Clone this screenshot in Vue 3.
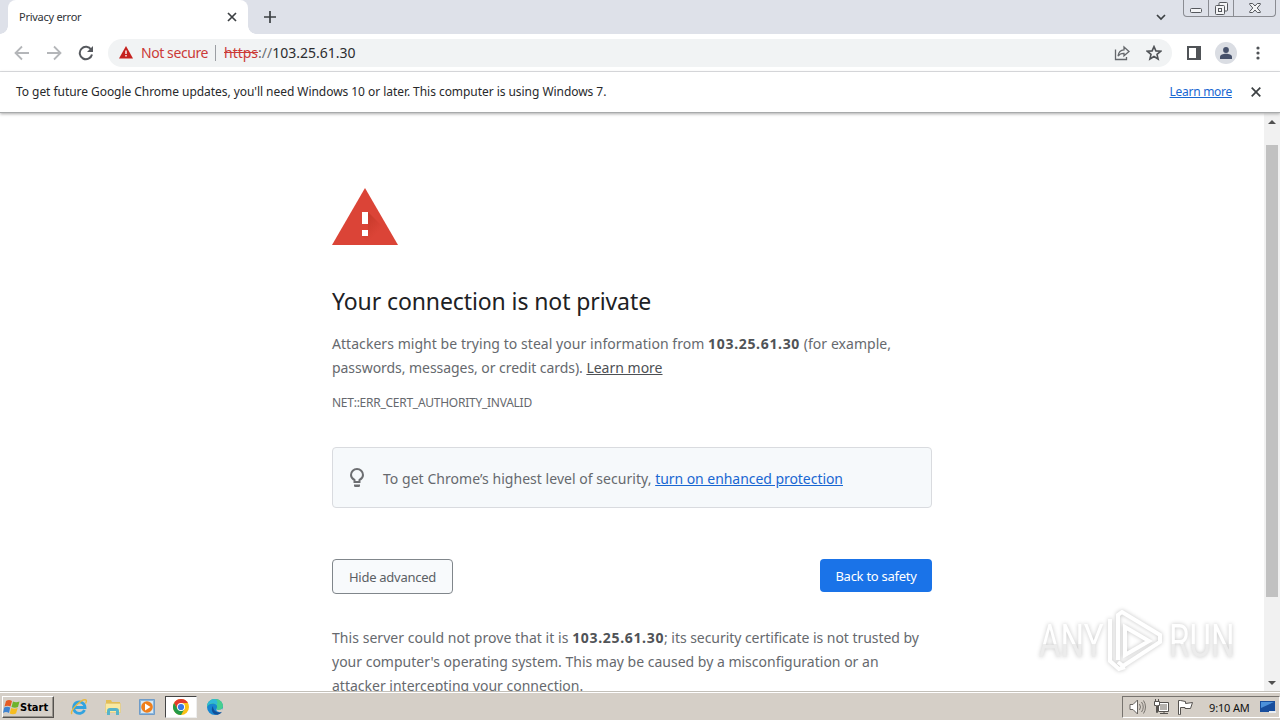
<template>
  <div class="screen">
    <header class="tab-strip">
      <div class="tab">
        <span class="tab-title">Privacy error</span>
        <svg class="tab-close" width="10" height="10" viewBox="0 0 10 10"><path d="M1 1l8 8M9 1L1 9" /></svg>
      </div>
      <svg class="new-tab" width="12" height="12" viewBox="0 0 12 12"><path d="M6 0v12M0 6h12" /></svg>
      <svg class="tab-search" width="10" height="7" viewBox="0 0 10 7"><path d="M1 1l4 4 4-4" /></svg>
      <div class="window-controls">
        <span class="control"><svg width="12" height="5" viewBox="0 0 12 5"><rect x=".5" y=".5" width="11" height="4" rx="1" /></svg></span>
        <span class="control middle"><svg width="13" height="13" viewBox="0 0 13 13"><path d="M4 3.500V1.500Q4 .5 5 .5h6.500q1 0 1 1V8q0 1-1 1h-2" /><rect x=".5" y="3.500" width="9" height="9" rx="1" /><rect x="3.500" y="6.500" width="3" height="3" /></svg></span>
        <span class="control close"><svg width="12" height="10" viewBox="0 0 12 10"><path d="M.7.5h3L6 3 8.300.5h3v1L8.200 5l3.100 3.500v1h-3L6 7 3.700 9.500h-3v-1L3.800 5 .7 1.500z" /></svg></span>
      </div>
    </header>

    <div class="toolbar">
      <svg class="nav" width="16" height="16" viewBox="0 0 16 16"><path d="M15 8H2M8 1.500L1.500 8 8 14.500" /></svg>
      <svg class="nav" width="16" height="16" viewBox="0 0 16 16"><path d="M1 8h13M8 1.500L14.500 8 8 14.500" /></svg>
      <svg class="nav reload" width="16" height="16" viewBox="0 0 16 16"><path d="M13.200 4.700A6.200 6.200 0 1 0 14 9.500" /><path class="solid" d="M15 1v6H9z" /></svg>
      <div class="omnibox">
        <svg class="warn" width="14" height="13" viewBox="0 0 14 13"><path fill="#c5221f" d="M7 0l7 12.500H0z" /><path fill="#fff" d="M6.300 4.500h1.400v3.500H6.300zm0 4.500h1.400v1.500H6.300z" /></svg>
        <span class="not-secure">Not secure</span>
        <span class="divider"></span>
        <span class="url"><s>https</s><i>://</i>103.25.61.30</span>
        <svg class="share" width="16" height="16" viewBox="0 0 16 16"><path d="M1.500 4.500v10h11V12" /><path d="M4 11c.6-4 2.500-6 6-6.200V2l5 4.500-5 4.300V8.300C7.300 8.200 5.500 9 4 11z" /></svg>
        <svg class="star" width="16" height="16" viewBox="0 0 16 16"><path d="M8 1.600l1.900 4.300 4.700.4-3.600 3.100 1.100 4.600L8 11.500 3.900 14 5 9.400 1.400 6.300l4.700-.4z" /></svg>
      </div>
      <svg class="panel" width="14" height="14" viewBox="0 0 14 14"><path fill="#505357" fill-rule="evenodd" d="M0 0h14v14H0zM2 2v10h7V2z" /></svg>
      <span class="avatar"><svg width="12" height="12" viewBox="0 0 12 12"><circle cx="6" cy="3" r="2.900" /><path d="M0 12v-2c0-2 3-3.200 6-3.200S12 8 12 10v2z" /></svg></span>
      <svg class="menu" width="4" height="14" viewBox="0 0 4 14"><circle cx="2" cy="2" r="1.600" /><circle cx="2" cy="7" r="1.600" /><circle cx="2" cy="12" r="1.600" /></svg>
    </div>

    <div class="infobar">
      <span class="notice">To get future Google Chrome updates, you'll need Windows 10 or later. This computer is using Windows 7.</span>
      <a class="info-link" href="#">Learn more</a>
      <svg class="info-close" width="10" height="10" viewBox="0 0 10 10"><path d="M.7.7l8.600 8.600M9.300.7L.7 9.300" /></svg>
    </div>

    <div class="viewport">
      <main class="interstitial">
        <svg class="alert" width="66" height="57" viewBox="0 0 66 57">
          <defs>
            <linearGradient id="shade" x1="0" y1="0" x2="1" y2="1">
              <stop offset="0" stop-color="#a52714" stop-opacity=".5" />
              <stop offset=".55" stop-color="#a52714" stop-opacity="0" />
            </linearGradient>
          </defs>
          <path fill="#db4437" d="M33 0l33 57H0z" />
          <path fill="url(#shade)" d="M36 24l16 16 10 17H39l-9-9h6z" />
          <path fill="#fff" d="M30 24h6v12h-6zM30 42h6v6h-6z" />
        </svg>
        <h1>Your connection is not private</h1>
        <div class="copy">
          <div>Attackers might be trying to steal your information from <strong>103.25.61.30</strong> (for example,</div>
          <div class="tight">passwords, messages, or credit cards). <a href="#">Learn more</a></div>
        </div>
        <div class="error-code">NET::ERR_CERT_AUTHORITY_INVALID</div>
        <div class="promo">
          <svg width="14" height="20" viewBox="0 0 14 20"><path fill="none" stroke="#6c6e71" stroke-width="2" d="M4.500 14v-2C2.300 10.800 1 9.200 1 7a6 6 0 0 1 12 0c0 2.200-1.300 3.800-3.500 5v2z" /><path fill="#6c6e71" d="M4 16.500h6v1.200q0 1.300-1.300 1.300H5.300Q4 19 4 17.700z" /></svg>
          <p>To get Chrome’s highest level of security, <a href="#">turn on enhanced protection</a></p>
        </div>
        <div class="buttons">
          <button class="secondary">Hide advanced</button>
          <button class="primary">Back to safety</button>
        </div>
        <div class="copy details">
          <div>This server could not prove that it is <strong>103.25.61.30</strong><span class="tight">; its security certificate is not trusted by</span></div>
          <div class="even">your computer's operating system. This may be caused by a misconfiguration or an</div>
          <div class="even">attacker intercepting your connection.</div>
        </div>
      </main>
      <div class="scrollbar">
        <svg width="8" height="4" viewBox="0 0 8 4"><path d="M4 0l4 4H0z" /></svg>
        <div class="thumb"></div>
        <svg class="down" width="8" height="4" viewBox="0 0 8 4"><path d="M0 0h8L4 4z" /></svg>
      </div>
      <div class="watermark">
        <span class="any">ANY</span>
        <svg width="58" height="62" viewBox="0 0 58 62"><path d="M12 50V5l4-3 38 23v7L17 56l-5-4M19 45V17l24 14zM4 9v42l9 8 6-2" /></svg>
        <span class="run">RUN</span>
      </div>
    </div>

    <footer class="taskbar">
      <div class="start">
        <svg width="17" height="16" viewBox="0 0 17 16"><path fill="#e55b24" d="M3 2q3-2 6 0L7.500 7.500q-3-1.500-6 0z" /><path fill="#6eb32c" d="M10 2.500q3 1.500 6.500 0L15 8q-3 1.500-6.500 0z" /><path fill="#3f83d0" d="M1.200 8.500q3-1.500 6 0L6 14q-3-2-6 0z" /><path fill="#f6bd20" d="M8.200 9q3 1.500 6.500 0L13 14.500q-3 1.500-6.300 0z" /></svg>
        <span>Start</span>
      </div>
      <div class="apps">
        <span class="app"><svg width="18" height="18" viewBox="0 0 18 18"><path fill="none" stroke="#32a3df" stroke-width="2.800" d="M14.500 12A5.700 5.700 0 1 1 15 9.500H5" /><path fill="none" stroke="#e8b93f" stroke-width="1.400" d="M2 16C-1 13 12 0 16 2q1 1-.5 3.500" /></svg></span>
        <span class="app"><svg width="18" height="18" viewBox="0 0 18 18"><path fill="#e3be55" d="M2 2h5l1 2h8v4H2z" /><path fill="#fae9a0" stroke="#dfc678" stroke-width=".6" d="M1.500 5.500h15v9h-15z" /><path fill="#57b4c9" d="M3 17v-4q0-3 3-3h6q3 0 3 3v4h-3v-4H6v4z" /></svg></span>
        <span class="app"><svg width="18" height="18" viewBox="0 0 18 18"><path fill="#8bb7dd" stroke="#6f9cc8" d="M1.500 1.500h15v15h-15z" /><path fill="#d8e9f4" d="M3 3h12v12H3z" /><circle cx="9" cy="9" r="5.800" fill="#ef7f1b" /><path fill="#fff" d="M7 5.500l5.500 3.500L7 12.500z" /></svg></span>
        <span class="app active"><svg width="16" height="16" viewBox="0 0 16 16"><circle cx="8" cy="8" r="8" fill="#fbc116" /><path fill="#e33b2e" d="M1.070 4A8 8 0 0 1 14.930 4H8L4.540 10z" /><path fill="#249a48" d="M1.070 4A8 8 0 0 0 8 16l3.460-6H4.540z" /><circle cx="8" cy="8" r="4" fill="#fff" /><circle cx="8" cy="8" r="3.100" fill="#3978e6" /></svg></span>
        <span class="app"><svg width="16" height="16" viewBox="0 0 16 16"><circle cx="8" cy="8" r="8" fill="#1786d1" /><path fill="#47cf90" d="M8 0c5 0 8 3.500 8 7 0 2.500-2 4-4.500 4-2 0-2.500-1-1.700-2C11 7 9 4.500 6 4.500 3 4.500 1 6 0 8c0-4.500 3.500-8 8-8z" /><path fill="#30b9d8" d="M8 0C4 0 .5 3 0 7c2-3 7-4 10-1 1-3 0-5-2-6z" /><path fill="#124f98" d="M6 7c-3 4 0 9 4.500 8.800 2-.5 3.500-1.500 4.500-3-4 1.700-9-.3-9-5.800z" /><path fill="#d5cfc7" d="M9.800 9c-.8 1-.3 2 1.700 2 1.800 0 3.200-.5 4-1.700L16 12l-1 .8c-3 1-7-.3-5.200-3.800z" /></svg></span>
      </div>
      <div class="tray">
        <svg width="17" height="16" viewBox="0 0 17 16"><path fill="#fff" stroke="#66635f" d="M1 5.500h3L8.500 1v14L4 10.500H1z" /><path fill="none" stroke="#77736e" d="M10.500 5q2 3 0 6M12.500 3q3.500 5 0 10M14.500 1.500q4 6.500 0 13" /></svg>
        <svg width="17" height="16" viewBox="0 0 17 16"><path fill="#fff" stroke="#55524f" d="M5.500 3.500h10v9h-10z" /><path fill="#b5b2ae" d="M7 5h7v6H7z" /><path fill="none" stroke="#55524f" d="M7 14.500h8M11 13v2" /><path fill="#fff" stroke="#55524f" d="M1.500 2.500h5v4h-2v7h-1v-7h-2zM2.500 2V0M5.500 2V0" /></svg>
        <svg width="17" height="16" viewBox="0 0 17 16"><path fill="#fff" stroke="#55524f" d="M2.500 15.500h-1V1.500h2l5 1v2l7-1-2 6H8V8.500H3.500v7z" /></svg>
        <span class="clock">9:10 AM</span>
        <svg class="desktop" width="16" height="14" viewBox="0 0 16 14"><path fill="#184e9d" d="M0 1h15v11H0z" /><path fill="#4c91da" d="M1 2h13L1 8z" /><path fill="#e7edf3" d="M9 11h7v2H9z" /></svg>
      </div>
    </footer>
  </div>
</template>

<script setup>
</script>

<style>
body {
  margin: 0;
  overflow: hidden;
}
</style>

<style scoped>
.screen {
  width: 1280px;
  height: 720px;
  display: flex;
  flex-direction: column;
  overflow: hidden;
  background: #fff;
  font-family: 'Noto Sans', sans-serif;
  white-space: nowrap;
}

svg {
  display: block;
  flex: none;
}

/* Tabs */
.tab-strip {
  height: 34px;
  flex: none;
  display: flex;
  align-items: center;
  background: #dee1e9;
}

.tab {
  position: relative;
  box-sizing: border-box;
  width: 240px;
  height: 34px;
  margin-left: 8px;
  padding: 0 11px;
  display: flex;
  align-items: center;
  justify-content: space-between;
  background: #fff;
  border-radius: 8px 8px 0 0;
}

.tab::before,
.tab::after {
  content: '';
  position: absolute;
  bottom: 0;
  width: 8px;
  height: 8px;
}

.tab::before {
  left: -8px;
  background: radial-gradient(circle at 0 0, transparent 7.5px, #fff 8px);
}

.tab::after {
  right: -8px;
  background: radial-gradient(circle at 100% 0, transparent 7.5px, #fff 8px);
}

.tab-title {
  margin-top: -1px;
  font-size: 11px;
  letter-spacing: -0.27px;
  color: #303236;
}

.tab-close,
.new-tab,
.tab-search,
.info-close {
  fill: none;
  stroke: #3c4043;
  stroke-width: 1.7;
}

.new-tab {
  margin-left: 16px;
}

.tab-search {
  margin-left: auto;
}

.window-controls {
  box-sizing: border-box;
  width: 93px;
  height: 17px;
  margin: 0 4px 0 17px;
  align-self: flex-start;
  display: flex;
  border: 1px solid #8a8c92;
  border-top: 0;
  border-radius: 0 0 4px 4px;
}

.control {
  width: 24px;
  display: flex;
  align-items: center;
  justify-content: center;
}

.control svg {
  fill: #f3f4f6;
  stroke: #55585d;
}

.control:first-child svg {
  margin-top: 5px;
}

.control.middle {
  border: solid #8a8c92;
  border-width: 0 1px;
}

.control.close {
  flex: 1;
}

/* Toolbar */
.toolbar {
  box-sizing: border-box;
  height: 38px;
  flex: none;
  display: flex;
  align-items: center;
  padding-left: 14px;
  border-bottom: 1px solid #dcdee1;
}

.nav {
  margin-right: 16px;
  fill: none;
  stroke: #b4b6b9;
  stroke-width: 1.8;
}

.reload {
  margin-right: 14px;
  stroke: #56595e;
  stroke-width: 2;
}

.solid {
  fill: #56595e;
  stroke: none;
}

.omnibox {
  box-sizing: border-box;
  width: 1064px;
  height: 28px;
  padding: 0 10px 0 11px;
  display: flex;
  align-items: center;
  background: #f1f3f4;
  border-radius: 14px;
  font-size: 14px;
}

.not-secure {
  margin-left: 8px;
  width: 67px;
  letter-spacing: -0.42px;
  color: #cb3a37;
}

.divider {
  width: 1px;
  height: 16px;
  margin: 0 8px 0 7px;
  background: #9b9ea3;
}

.url {
  color: #2b2c2f;
}

.url s {
  color: #cb3a37;
}

.url i {
  font-style: normal;
  color: #6a6d71;
}

.share {
  margin-left: auto;
  fill: none;
  stroke: #65686c;
  stroke-width: 1.3;
}

.star {
  margin-left: 16px;
  fill: none;
  stroke: #505357;
  stroke-width: 1.6;
}

.panel {
  margin-left: 15px;
}

.avatar {
  width: 22px;
  height: 22px;
  margin-left: 14px;
  display: flex;
  align-items: center;
  justify-content: center;
  border-radius: 50%;
  background: #dadde3;
  fill: #46516b;
}

.menu {
  margin-left: 19px;
  fill: #505357;
}

/* Infobar */
.infobar {
  position: relative;
  z-index: 1;
  box-sizing: border-box;
  height: 41px;
  flex: none;
  display: flex;
  align-items: center;
  padding: 0 19px 1px 16px;
  border-bottom: 1px solid #a8aaab;
  box-shadow: 0 1px 3px #aaa;
  background: #fff;
  font-size: 12px;
  color: #28292b;
}

.notice {
  letter-spacing: -0.05px;
}

.info-link {
  margin-left: auto;
  letter-spacing: -0.28px;
  color: #1967d2;
}

.info-close {
  margin-left: 19px;
}

/* Page */
.viewport {
  position: relative;
  height: 578px;
  flex: none;
  display: flex;
  overflow: hidden;
}

.interstitial {
  width: 600px;
  padding: 75px 0 0 68px;
  margin-left: 264px;
}

h1 {
  margin: 40px 0 0;
  font-size: 23px;
  font-weight: 400;
  line-height: 33px;
  letter-spacing: -0.1px;
  color: #202124;
}

.copy {
  margin-top: 14px;
  font-size: 14px;
  line-height: 24px;
  letter-spacing: 0.05px;
  color: #66696e;
}

.copy strong {
  letter-spacing: 0.67px;
  color: #505357;
}

.copy a {
  letter-spacing: 0;
  color: #4d5054;
}

.tight {
  letter-spacing: -0.05px;
}

.even {
  letter-spacing: 0;
}

.error-code {
  margin-top: 13px;
  font-size: 12px;
  line-height: 20px;
  letter-spacing: -0.26px;
  color: #66696e;
}

.promo {
  box-sizing: border-box;
  height: 61px;
  margin-top: 34px;
  padding-left: 17px;
  display: flex;
  align-items: center;
  border: 1px solid #d9dbdf;
  border-radius: 4px;
  background: #f6f9fb;
  color: #66696e;
  font-size: 14px;
  letter-spacing: 0.04px;
}

.promo p {
  margin: 2px 0 0 19px;
}

.promo a {
  letter-spacing: -0.05px;
  color: #1967d2;
}

.buttons {
  display: flex;
  align-items: flex-start;
  justify-content: space-between;
  margin-top: 51px;
}

button {
  box-sizing: border-box;
  padding: 0;
  font: 13px 'Noto Sans', sans-serif;
  letter-spacing: -0.27px;
  border-radius: 4px;
}

.secondary {
  width: 121px;
  height: 35px;
  border: 1px solid #80868b;
  background: #f8fafc;
  color: #5b5f64;
}

.primary {
  width: 112px;
  height: 33px;
  border: 0;
  background: #1a73e8;
  color: #fff;
}

.details {
  margin-top: 32px;
}

.scrollbar {
  box-sizing: border-box;
  width: 16px;
  margin-left: auto;
  padding: 7px 0 6px;
  display: flex;
  flex-direction: column;
  align-items: center;
  background: #f1f1f1;
  fill: #505050;
}

.thumb {
  width: 12px;
  height: 452px;
  margin-top: 21px;
  background: #c1c1c1;
}

.down {
  margin-top: auto;
}

.watermark {
  position: absolute;
  left: 1039px;
  top: 497px;
  display: flex;
  align-items: center;
  color: #fff;
  font: 46px 'Roboto', sans-serif;
  filter: drop-shadow(0 0 2px #c4c4c4);
}

.watermark svg {
  margin-right: 5px;
  fill: none;
  stroke: #fff;
  stroke-width: 4;
}

.watermark span {
  width: 67px;
  line-height: 62px;
  transform: scaleX(0.72);
  transform-origin: left;
  background: linear-gradient(#fff 55%, #ececec 55%);
  -webkit-background-clip: text;
  background-clip: text;
  -webkit-text-fill-color: transparent;
}

.watermark .any,
.watermark .run {
  width: 90px;
  margin-right: -23px;
}

/* Taskbar */
.taskbar {
  height: 29px;
  flex: none;
  box-sizing: border-box;
  display: flex;
  align-items: center;
  background: #d5cfc7;
  border-top: 1px solid #c3c0b9;
  box-shadow: inset 0 1px #fff;
}

.start {
  box-sizing: border-box;
  width: 52px;
  height: 22px;
  margin: 2px 0 0 2px;
  display: flex;
  align-items: center;
  border: 1px solid;
  border-color: #fff #55524e #55524e #fff;
  box-shadow: inset -1px -1px #98948d;
  font: bold 11px 'DejaVu Sans Condensed', sans-serif;
}

.apps {
  display: flex;
  margin: 2px 0 0 9px;
}

.app {
  box-sizing: border-box;
  width: 32px;
  height: 22px;
  margin-right: 2px;
  display: flex;
  align-items: center;
  justify-content: center;
}

.app.active {
  border: 1px solid;
  border-color: #444 #eee #eee #444;
  background: #fff;
}

.tray {
  box-sizing: border-box;
  width: 158px;
  height: 22px;
  margin: 2px 0 0 auto;
  padding: 0 3px 0 6px;
  display: flex;
  align-items: center;
  gap: 7px;
  border: 1px solid;
  border-color: #77736e #fff #fff #77736e;
}

.clock {
  margin-left: 8px;
  width: 42px;
  font-size: 11px;
  letter-spacing: -0.15px;
  color: #111;
}

.desktop {
  margin-left: 2px;
}
</style>
